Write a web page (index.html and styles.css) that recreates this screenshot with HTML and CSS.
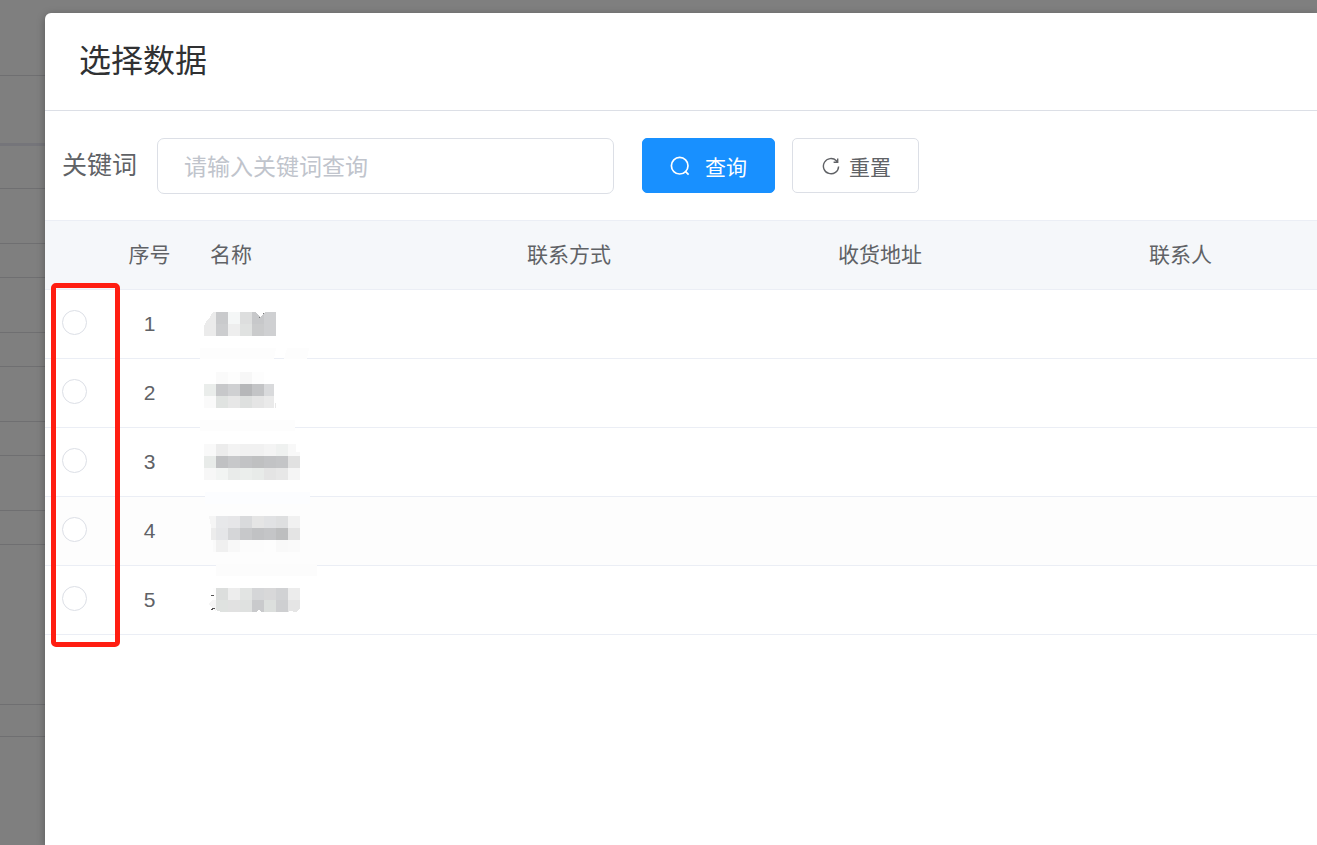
FILE: index.html
```html
<!DOCTYPE html>
<html lang="zh-CN">
<head>
    <meta charset="UTF-8">
    <meta name="viewport" content="width=device-width, initial-scale=1.0">
    <title>选择数据</title>
    <link rel="stylesheet" href="styles.css">
</head>
<body>
    <div class="page-behind">
        <div class="line h-top"></div>
        <div class="line h-bar"></div>
        <div class="line h-first"></div>
        <div class="line h-tall"></div>
        <div class="line h-short"></div>
        <div class="line h-tall"></div>
        <div class="line h-short"></div>
        <div class="line h-tall"></div>
        <div class="line h-short"></div>
        <div class="line h-tall"></div>
        <div class="line h-short"></div>
        <div class="line h-empty"></div>
        <div class="line h-pager"></div>
    </div>

    <div class="dialog" role="dialog" aria-labelledby="dialogTitle">
        <div class="dialog-header">
            <h2 id="dialogTitle">选择数据</h2>
        </div>

        <form class="search-form" onsubmit="return false">
            <label for="keyword">关键词</label>
            <input type="text" id="keyword" placeholder="请输入关键词查询">
            <button type="submit" class="btn btn-primary">
                <svg class="icon-search" viewBox="0 0 20 20" aria-hidden="true">
                    <circle cx="9.7" cy="9.7" r="8.3"/>
                    <path d="M15.6 15.6L18.6 18.6"/>
                </svg>
                查询
            </button>
            <button type="reset" class="btn btn-default">
                <svg class="icon-reset" viewBox="0 0 18 18" aria-hidden="true">
                    <path d="M16.6 9.4A7.6 7.6 0 1 1 14.4 3.8L15.4 4.8M15.7 1.6V5.2H11.6"/>
                </svg>
                重置
            </button>
        </form>

        <div class="table-wrap">
            <table>
                <colgroup>
                    <col class="col-radio">
                    <col class="col-index">
                    <col class="col-name">
                    <col class="col-data">
                    <col class="col-data">
                    <col>
                </colgroup>
                <thead>
                    <tr>
                        <th></th>
                        <th class="center">序号</th>
                        <th>名称</th>
                        <th>联系方式</th>
                        <th>收货地址</th>
                        <th>联系人</th>
                    </tr>
                </thead>
                <tbody>
                    <tr>
                        <td><input type="radio" name="row" aria-label="选择 1"></td>
                        <td class="center">1</td>
                        <td class="name"><svg class="mosaic"></svg></td>
                        <td></td><td></td><td></td>
                    </tr>
                    <tr>
                        <td><input type="radio" name="row" aria-label="选择 2"></td>
                        <td class="center">2</td>
                        <td class="name"><svg class="mosaic"></svg></td>
                        <td></td><td></td><td></td>
                    </tr>
                    <tr>
                        <td><input type="radio" name="row" aria-label="选择 3"></td>
                        <td class="center">3</td>
                        <td class="name"><svg class="mosaic"></svg></td>
                        <td></td><td></td><td></td>
                    </tr>
                    <tr class="striped">
                        <td><input type="radio" name="row" aria-label="选择 4"></td>
                        <td class="center">4</td>
                        <td class="name"><svg class="mosaic"></svg></td>
                        <td></td><td></td><td></td>
                    </tr>
                    <tr>
                        <td><input type="radio" name="row" aria-label="选择 5"></td>
                        <td class="center">5</td>
                        <td class="name"><svg class="mosaic"></svg></td>
                        <td></td><td></td><td></td>
                    </tr>
                </tbody>
            </table>
            <div class="marker"></div>
        </div>
    </div>

    <script>
        // masked names: top of the blocks, rows of colours, and extra shapes on top
        const masks = [
            {
                top: 22,
                rows: [
                    '#ebebeb #c9cacc #f5f7f7 #dddede #c7c8ca #cfd0d2',
                    '#ebebeb #cccdcf #eeeeee #e0e2e1 #cacbcc #cfd0d2'
                ],
                extra: '<path fill="#fff" d="M10 22h9l-3 5-4 5-2 4zM62 22h9l-5 5z"/>' +
                    '<path fill="#777" d="M65 27h1v1h-1zM69 23h1v1h-1z"/>' +
                    '<path fill="#fdfdfd" d="M6 58h76l-2 11H6zM93 58h22l-2 11H90z"/>'
            },
            {
                top: 13,
                rows: [
                    '#ffffff #fafafa #fdfdfd #f7f7f7 #fdfdfd #ffffff',
                    '#eaedeb #c7c8ca #cfd0d2 #b6b7b9 #c3c4c6 #d9dadc',
                    '#fafafa #e0e3e1 #e7e7e7 #dee0df #e5e5e5 #eaeaea'
                ],
                extra: '<path fill="#fff" d="M80 25h2v24h-2z"/><path fill="#e8e8e8" d="M81 44h1v5h-1z"/>' +
                    '<path fill="#fdfdfd" d="M6 61h95v11H6z"/>'
            },
            {
                top: 16,
                rows: [
                    '#f9f9f9 #ececec #f3f3f3 #f1f1f1 #f1f1f1 #f4f4f4 #eff1f0 #f8f8f8',
                    '#e8ebe9 #c0c1c3 #c7c8ca #c2c3c5 #bfc0c1 #c2c3c5 #c4c5c7 #e1e1e1',
                    '#f7f7f7 #f2f4f3 #e9ebea #ebeeec #e8ebe9 #e4e4e4 #e7e7e7 #f5f5f5'
                ],
                extra: '<path fill="#fff" d="M102 16h4v8h-4z"/>' +
                    '<path fill="#fcfdff" d="M11 64h105v12H11z"/>'
            },
            {
                top: 19,
                rows: [
                    '#f5f5f5 #e7e8ea #e6e6e8 #d9dadc #e5e5e5 #e1e2e4 #dedfe0 #f1f1f1',
                    '#ececec #e5e6e8 #d5d6d8 #c7c8ca #c1c2c4 #c4c5c7 #bdbebf #e4e4e4',
                    '#fafafa #f0f0f0 #f8f8f8 #fcfcfc #fcfcfc #fdfdfd #f9f9f9 #fafafa'
                ],
                extra: '<path fill="#fdfdfd" d="M10 19h5l2 10v14h2v12h-9z"/>' +
                    '<path fill="#fcfcfc" d="M22 67h101v12H22z"/>'
            },
            {
                top: 22,
                rows: [
                    '#fdfdfd #dcdedd #ededed #e2e4e3 #d5d6d8 #d8d8d9 #d1d2d4 #ececec',
                    '#f5f5f5 #dfe2e0 #e1e1e1 #dfe1e0 #c9cacc #dcdfdd #cecfd1 #e5e5e5'
                ],
                extra: '<path fill="#fff" d="M10 22h9v12l-5 4 4 3 4 5h-12zM22 44l5 2h-5zM63 46v-1l2-1 2 1v1zM95 46v-1h4v1zM106 42v4h-4z"/>' +
                    '<path fill="#555" d="M17 29h3v1h-3zM17 43h2v1h-2zM18 42h3v1h-3z"/>'
            }
        ];

        document.querySelectorAll('.mosaic').forEach((svg, i) => {
            const mask = masks[i];
            let html = '';
            mask.rows.forEach((row, y) => {
                row.split(' ').forEach((color, x) => {
                    html += `<rect x="${10 + x * 12}" y="${mask.top + y * 12}" width="12" height="12" fill="${color}"/>`;
                });
            });
            svg.innerHTML = html + mask.extra;
        });
    </script>
</body>
</html>
```
FILE: styles.css
```css
* {
    box-sizing: border-box;
}
body {
    margin: 0;
    min-height: 100vh;
    padding: 13px 0 0 45px;
    background-color: #7f7f7f;
    color: #606266;
    font-family: "Liberation Sans", "Noto Sans CJK SC", sans-serif;
    font-size: 21px;
    overflow: hidden;
}

/* Page under the overlay */
.page-behind {
    position: absolute;
    top: 0;
    left: 0;
    width: 100%;
}
.line {
    border-bottom: 1px solid #6f6f71;
}
.h-top {
    height: 76px;
}
.h-bar {
    height: 70px;
    border-bottom: 3px solid #75757a;
}
.h-first {
    height: 43px;
}
.h-tall {
    height: 55px;
}
.h-short {
    height: 34px;
}
.h-empty {
    height: 160px;
}
.h-pager {
    height: 32px;
}

/* Dialog */
.dialog {
    position: relative;
    min-height: calc(100vh - 13px);
    background-color: #fff;
    border-top-left-radius: 6px;
    box-shadow: 0 2px 8px rgba(0, 0, 0, 0.3);
}
.dialog-header {
    display: flex;
    align-items: center;
    height: 98px;
    padding: 0 34px 8px;
    border-bottom: 1px solid #dcdfe6;
}
.dialog-header h2 {
    margin: 0;
    color: #303133;
    font-size: 32px;
    font-weight: 400;
}

.search-form {
    display: flex;
    align-items: flex-start;
    padding: 27px 17px 26px;
}
.search-form label {
    margin-right: 20px;
    font-size: 25px;
    line-height: 54px;
}
.search-form input {
    width: 457px;
    height: 56px;
    margin-right: 28px;
    padding: 2px 26px 0;
    border: 1px solid #dcdfe6;
    border-radius: 7px;
    color: #606266;
    font-family: inherit;
    font-size: 23px;
}
.search-form input::placeholder {
    color: #c0c4cc;
}
.btn {
    display: flex;
    align-items: center;
    height: 55px;
    padding: 0 27px;
    border: 1px solid #dcdfe6;
    border-radius: 5px;
    background-color: #fff;
    color: #606266;
    font-family: inherit;
    font-size: 21px;
    cursor: pointer;
}
.btn svg {
    fill: none;
    stroke: currentColor;
}
.btn-primary {
    margin-right: 17px;
    background-color: #1890ff;
    border-color: #1890ff;
    color: #fff;
}
.icon-search {
    width: 20px;
    height: 20px;
    margin-right: 15px;
    stroke-width: 1.7;
}
.btn-default {
    padding: 0 27px 0 29px;
}
.icon-reset {
    width: 18px;
    height: 18px;
    margin-right: 9px;
    stroke-width: 1.4;
}

/* Table */
.table-wrap {
    position: relative;
}
table {
    width: 100%;
    table-layout: fixed;
    border-collapse: separate;
    border-spacing: 0;
}
.col-radio {
    width: 60px;
}
.col-index {
    width: 89px;
}
.col-name {
    width: 317px;
}
.col-data {
    width: 311px;
}
th, td {
    height: 69px;
    padding: 0 16px;
    border-bottom: 1px solid #ebeef5;
    text-align: left;
}
th {
    height: 70px;
    padding-bottom: 4px;
    border-top: 1px solid #ebeef5;
    background-color: #f5f7fa;
    font-weight: 400;
}
.center {
    padding-left: 0;
    padding-right: 0;
    text-align: center;
}
.striped td {
    background-color: #fdfdfd;
}
input[type="radio"] {
    appearance: none;
    display: block;
    width: 25px;
    height: 25px;
    margin: 0 0 4px 1px;
    border: 1px solid #dcdfe6;
    border-radius: 50%;
    background-color: #fff;
}
.name {
    padding: 0;
}
.mosaic {
    display: block;
    width: 126px;
    height: 68px;
    overflow: visible;
    shape-rendering: crispEdges;
}

/* Highlight around the radio column */
.marker {
    position: absolute;
    top: 63px;
    left: 6px;
    width: 69px;
    height: 364px;
    border: 5px solid #ff1e12;
    border-radius: 5px;
    pointer-events: none;
}
```
